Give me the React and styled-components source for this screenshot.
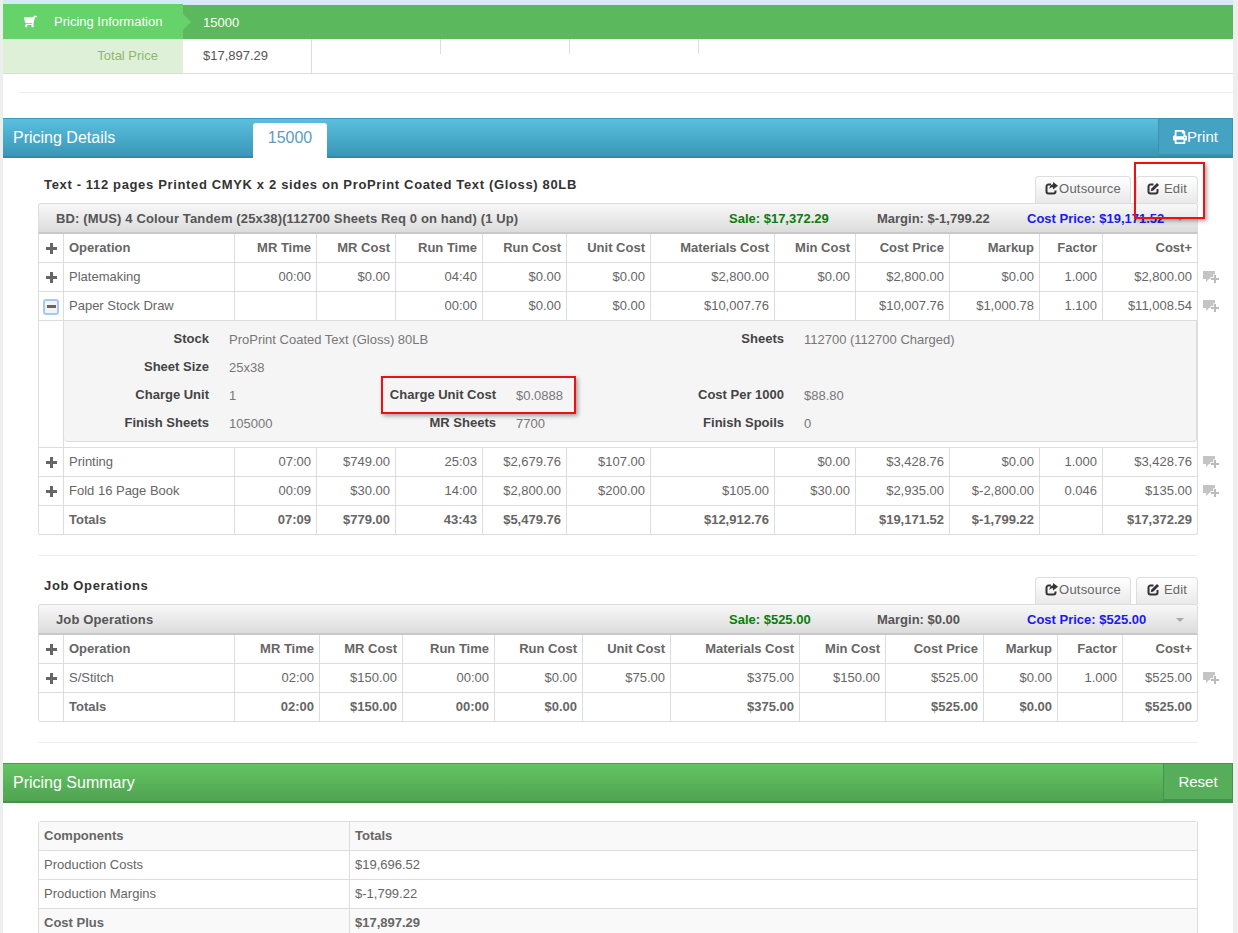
import React from 'react';
import styled, { createGlobalStyle } from 'styled-components';
import { FaShoppingCart, FaPrint } from 'react-icons/fa';

const Global = createGlobalStyle`
  html, body { margin: 0; padding: 0; background: #fff; }
  body { font-family: "Liberation Sans", Arial, sans-serif; font-size: 13px; color: #666; height: 933px; overflow: hidden; }
`;

const Page = styled.div`
  position: relative;
  width: 1238px;
  height: 933px;
  overflow: hidden;
  background: #eee;
  padding: 0 5px 0 3px;
  box-sizing: border-box;
`;

const Main = styled.div`
  background: #fff;
  height: 100%;
  border-top: 4px solid #d4eaf6;
`;

const InfoBar = styled.div`
  display: flex;
  height: 35px;
  box-sizing: border-box;
  border-top: 1px solid #d4eaf6;
  background: #5cb85c;
  color: #fff;
  font-size: 13px;
  align-items: center;
`;

const InfoLabel = styled.div`
  position: relative;
  width: 180px;
  height: 35px;
  margin-top: -1px;
  background: #65d26a;
  display: flex;
  align-items: center;
  box-sizing: border-box;
  padding-left: 21px;
  gap: 17px;
  svg { width: 13px; height: 13px; transform: scaleX(-1); }
  &:after {
    content: '';
    position: absolute;
    left: 100%;
    top: 10px;
    border-left: 8px solid #65d26a;
    border-top: 8px solid transparent;
    border-bottom: 8px solid transparent;
  }
`;

const InfoValue = styled.div`
  padding-left: 20px;
`;

const InfoRow = styled.div`
  display: flex;
  height: 34px;
  border-bottom: 1px solid #ddd;
`;

const InfoKey = styled.div`
  width: 180px;
  box-sizing: border-box;
  background: #dff0d8;
  color: #8fb56f;
  text-align: right;
  line-height: 33px;
  padding-right: 25px;
`;

const InfoCell = styled.div`
  width: ${p => p.$w}px;
  box-sizing: border-box;
  line-height: 33px;
  padding-left: 20px;
  color: #555;
  border-right: 1px solid #ddd;
  ${p => p.$short && 'height: 15px;'}
`;

const Rule = styled.div`
  height: 1px;
  background: #eee;
  margin: ${p => p.$m || '18px 0 25px 15px'};
`;

const Header = styled.div`
  position: relative;
  display: flex;
  align-items: center;
  height: 40px;
  box-sizing: border-box;
  color: #fff;
  font-size: 16px;
  padding-left: 10px;
  background: linear-gradient(to bottom, ${p => p.$green ? '#62c462, #51a351' : '#5bbfdd, #3997b7'});
  border-top: 1px solid ${p => p.$green ? '#4c9a4c' : '#3a9cbd'};
  border-bottom: 2px solid ${p => p.$green ? '#47904a' : '#338aa8'};
`;

const HeaderTitle = styled.div`
  width: 240px;
`;

const Tab = styled.div`
  align-self: flex-end;
  width: 74px;
  height: 35px;
  margin-bottom: -2px;
  background: #fff;
  color: #5b9dc0;
  border-radius: 3px 3px 0 0;
  text-align: center;
  line-height: 30px;
`;

const HeaderButton = styled.div`
  margin-left: auto;
  height: 38px;
  width: ${p => p.$w}px;
  box-sizing: border-box;
  margin-bottom: 1px;
  display: flex;
  align-items: center;
  justify-content: center;
  font-size: 15px;
  background: ${p => p.$green ? '#57ae5a' : '#44a3c3'};
  border: 1px solid ${p => p.$green ? '#45934a' : '#3a93b1'};
  border-bottom-width: 2px;
  svg { width: 14px; height: 14px; }
`;

const Content = styled.div`
  padding: 18px 35px 0;
`;

const JobHead = styled.div`
  display: flex;
  align-items: flex-start;
  justify-content: space-between;
  height: 27px;
`;

const JobTitle = styled.div`
  font-size: 13px;
  font-weight: bold;
  color: #333;
  letter-spacing: 0.65px;
  padding-left: 6px;
  line-height: 17px;
`;

const JobActions = styled.div`
  display: flex;
  gap: 5px;
`;

const TabButton = styled.div`
  height: 27px;
  width: ${p => p.$w}px;
  box-sizing: border-box;
  padding-bottom: 3px;
  display: flex;
  align-items: center;
  justify-content: center;
  gap: ${p => p.$gap}px;
  color: #666;
  font-size: 13px;
  letter-spacing: 0.2px;
  border: 1px solid #ddd;
  border-bottom: 0;
  border-radius: 4px 4px 0 0;
  background: linear-gradient(to bottom, #fff, #e9e9e9);
`;

const Machine = styled.div`
  display: flex;
  align-items: center;
  height: 31px;
  box-sizing: border-box;
  font-weight: bold;
  color: #555;
  font-size: 13px;
  padding-left: 17px;
  border: 1px solid #ddd;
  border-bottom: 2px solid #c8c8c8;
  border-radius: 3px 3px 0 0;
  background: linear-gradient(to bottom, #f8f8f8, #dcdcdc);
`;

const MachineName = styled.div`
  flex: 1;
  white-space: nowrap;
  letter-spacing: 0.14px;
`;

const Stat = styled.div`
  width: ${p => p.$w}px;
  color: ${p => p.$c || '#555'};
  white-space: nowrap;
`;

const Caret = styled.div`
  width: 0;
  height: 0;
  margin: 2px 13px 0 0;
  border-left: 4px solid transparent;
  border-right: 4px solid transparent;
  border-top: 4px solid #aaa;
`;

const Table = styled.table`
  width: 100%;
  table-layout: fixed;
  border-collapse: separate;
  border-spacing: 0;
  border-left: 1px solid #ddd;
  border-radius: 0 0 3px 3px;
  th, td {
    height: 29px;
    padding: 0 5px;
    font-size: 13px;
    line-height: 18px;
    border-right: 1px solid #ddd;
    border-bottom: 1px solid #ddd;
    text-align: right;
    white-space: nowrap;
    box-sizing: border-box;
  }
  th { color: #666; font-weight: bold; }
  th:nth-child(2), td:nth-child(2) { text-align: left; }
  th:first-child, td:first-child { padding: 0; text-align: center; }
  tbody tr:last-child td { font-weight: bold; }
  tr:last-child td:last-child { border-bottom-right-radius: 3px; }
`;

const DetailCell = styled.td`
  && { padding: 0 0 5px 0; text-align: left; height: auto; font-weight: normal; }
`;

const DetailPanel = styled.div`
  display: grid;
  grid-template-columns: 145px 171px 116px 172px 116px 1fr;
  grid-auto-rows: 28px;
  align-items: center;
  padding: 4px 0;
  height: 121px;
  box-sizing: border-box;
  background: #f5f5f5;
  border-bottom: 1px solid #ddd;
  border-right: 1px solid #ddd;
  border-radius: 0 0 4px 4px;
`;

const DetailKey = styled.div`
  text-align: right;
  font-weight: bold;
  font-size: 13px;
  color: #444;
  margin-top: -1px;
`;

const DetailValue = styled.div`
  padding-left: 20px;
  font-size: 13px;
  color: #777;
  white-space: nowrap;
  margin-top: 1px;
`;

const Toggle = styled.span`
  display: inline-flex;
  align-items: center;
  justify-content: center;
  vertical-align: middle;
  width: ${p => p.$open ? '16px' : '12px'};
  height: ${p => p.$open ? '16px' : '12px'};
  box-sizing: border-box;
  ${p => p.$open && 'border: 2px solid #a6c8f8; border-radius: 3px; background: #f4f4f4;'}
`;

const CommentSlot = styled.span`
  position: absolute;
  right: -22px;
  top: 8px;
  line-height: 0;
`;

const LastCell = styled.td`
  position: relative;
`;

const SummaryTable = styled.table`
  width: 100%;
  table-layout: fixed;
  border-collapse: separate;
  border-spacing: 0;
  border-left: 1px solid #ddd;
  border-top: 1px solid #ddd;
  border-radius: 3px 3px 0 0;
  th, td {
    height: 29px;
    padding: 0 5px;
    font-size: 13px;
    line-height: 18px;
    text-align: left;
    box-sizing: border-box;
    border-right: 1px solid #ddd;
    border-bottom: 1px solid #ddd;
  }
  th { font-weight: bold; background: #f9f9f9; }
`;

const Mark = styled.div`
  position: absolute;
  left: ${p => p.$x}px;
  top: ${p => p.$y}px;
  width: ${p => p.$w}px;
  height: ${p => p.$h}px;
  box-sizing: border-box;
  border: 2px solid #ee1111;
  box-shadow: 2px 2px 4px rgba(0, 0, 0, 0.35);
`;

const PlusIcon = () => (
  <svg width="11" height="11" viewBox="0 0 11 11"><path d="M4 0h3v4h4v3H7v4H4V7H0V4h4z" fill="#666" /></svg>
);

const MinusIcon = () => (
  <svg width="9" height="3" viewBox="0 0 9 3"><path d="M0 0h9v3H0z" fill="#666" /></svg>
);

const CommentPlus = () => (
  <svg width="16" height="13" viewBox="0 0 16 13">
    <path d="M0 0h12v8H6l-3 3V8H0z" fill="#c4c4c4" />
    <path d="M11 4h2v3h3v2h-3v3h-2V9H8V7h3z" fill="#bbb" stroke="#fff" strokeWidth="1.4" paintOrder="stroke" />
  </svg>
);

const ShareIcon = () => (
  <svg width="13" height="13" viewBox="0 0 13 13">
    <path d="M6 2.5H3.5A2 2 0 0 0 1.5 4.5v5a2 2 0 0 0 2 2h5a2 2 0 0 0 2-2V8.5" fill="none" stroke="#333" strokeWidth="2" />
    <path d="M8 0l5 3.7L8 7.4V5.2C6.4 5.2 5.2 5.8 4.4 7.2 4.4 4.6 5.8 2.7 8 2.3z" fill="#333" />
  </svg>
);

const EditIcon = () => (
  <svg width="13" height="13" viewBox="0 0 13 13">
    <path d="M6.5 2.5h-3a2 2 0 0 0-2 2v5a2 2 0 0 0 2 2h5a2 2 0 0 0 2-2V7" fill="none" stroke="#333" strokeWidth="2" />
    <path d="M10 1l2 2-5.6 5.6-2.6.6.6-2.6z" fill="#333" />
  </svg>
);

const Row = ({ cells, toggle }) => (
  <tr>
    <td>{toggle}</td>
    {cells.slice(0, -1).map((c, i) => <td key={i}>{c}</td>)}
    <LastCell>
      {cells[cells.length - 1]}
      {toggle && <CommentSlot><CommentPlus /></CommentSlot>}
    </LastCell>
  </tr>
);

const Cols = ({ widths }) => (
  <colgroup>
    {widths.map((w, i) => <col key={i} style={{ width: w }} />)}
  </colgroup>
);

const heads = ['Operation', 'MR Time', 'MR Cost', 'Run Time', 'Run Cost', 'Unit Cost', 'Materials Cost', 'Min Cost', 'Cost Price', 'Markup', 'Factor', 'Cost+'];
const plus = <Toggle><PlusIcon /></Toggle>;

const TableHead = () => (
  <thead>
    <tr>
      <th>{plus}</th>
      {heads.map(h => <th key={h}>{h}</th>)}
    </tr>
  </thead>
);

const JobActionButtons = () => (
  <JobActions>
    <TabButton $w={96} $gap={1}><ShareIcon />Outsource</TabButton>
    <TabButton $w={62} $gap={4}><EditIcon />Edit</TabButton>
  </JobActions>
);

const detail = [
  ['Stock', 'ProPrint Coated Text (Gloss) 80LB', '', '', 'Sheets', '112700 (112700 Charged)'],
  ['Sheet Size', '25x38', '', '', '', ''],
  ['Charge Unit', '1', 'Charge Unit Cost', '$0.0888', 'Cost Per 1000', '$88.80'],
  ['Finish Sheets', '105000', 'MR Sheets', '7700', 'Finish Spoils', '0'],
];

export default function App() {
  return (
    <>
      <Global />
      <Page>
        <Main>
          <InfoBar>
            <InfoLabel><FaShoppingCart />Pricing Information</InfoLabel>
            <InfoValue>15000</InfoValue>
          </InfoBar>
          <InfoRow>
            <InfoKey>Total Price</InfoKey>
            <InfoCell $w={129}>$17,897.29</InfoCell>
            <InfoCell $w={129} $short />
            <InfoCell $w={129} $short />
            <InfoCell $w={129} $short />
          </InfoRow>
          <Rule />
          <Header>
            <HeaderTitle>Pricing Details</HeaderTitle>
            <Tab>15000</Tab>
            <HeaderButton $w={75}><FaPrint />Print</HeaderButton>
          </Header>
          <Content>
            <JobHead>
              <JobTitle>Text - 112 pages Printed CMYK x 2 sides on ProPrint Coated Text (Gloss) 80LB</JobTitle>
              <JobActionButtons />
            </JobHead>
            <Machine>
              <MachineName>BD: (MUS) 4 Colour Tandem (25x38)(112700 Sheets Req 0 on hand) (1 Up)</MachineName>
              <Stat $w={148} $c="#0a7d0a">Sale: $17,372.29</Stat>
              <Stat $w={150}>Margin: $-1,799.22</Stat>
              <Stat $w={149} $c="#1a1aee">Cost Price: $19,171.52</Stat>
              <Caret />
            </Machine>
            <Table>
              <Cols widths={[25, 171, 82, 79, 87, 84, 84, 124, 81, 94, 90, 63, 95]} />
              <TableHead />
              <tbody>
                <Row toggle={plus} cells={['Platemaking', '00:00', '$0.00', '04:40', '$0.00', '$0.00', '$2,800.00', '$0.00', '$2,800.00', '$0.00', '1.000', '$2,800.00']} />
                <Row toggle={<Toggle $open><MinusIcon /></Toggle>} cells={['Paper Stock Draw', '', '', '00:00', '$0.00', '$0.00', '$10,007.76', '', '$10,007.76', '$1,000.78', '1.100', '$11,008.54']} />
                <tr>
                  <td />
                  <DetailCell colSpan={12}>
                    <DetailPanel>
                      {detail.flatMap((r, i) => r.map((t, j) => (
                        j % 2 === 0
                          ? <DetailKey key={`${i}-${j}`}>{t}</DetailKey>
                          : <DetailValue key={`${i}-${j}`}>{t}</DetailValue>
                      )))}
                    </DetailPanel>
                  </DetailCell>
                </tr>
                <Row toggle={plus} cells={['Printing', '07:00', '$749.00', '25:03', '$2,679.76', '$107.00', '', '$0.00', '$3,428.76', '$0.00', '1.000', '$3,428.76']} />
                <Row toggle={plus} cells={['Fold 16 Page Book', '00:09', '$30.00', '14:00', '$2,800.00', '$200.00', '$105.00', '$30.00', '$2,935.00', '$-2,800.00', '0.046', '$135.00']} />
                <Row cells={['Totals', '07:09', '$779.00', '43:43', '$5,479.76', '', '$12,912.76', '', '$19,171.52', '$-1,799.22', '', '$17,372.29']} />
              </tbody>
            </Table>
            <Rule $m="20px 0 21px 0" />
            <JobHead>
              <JobTitle>Job Operations</JobTitle>
              <JobActionButtons />
            </JobHead>
            <Machine>
              <MachineName>Job Operations</MachineName>
              <Stat $w={148} $c="#0a7d0a">Sale: $525.00</Stat>
              <Stat $w={150}>Margin: $0.00</Stat>
              <Stat $w={149} $c="#1a1aee">Cost Price: $525.00</Stat>
              <Caret />
            </Machine>
            <Table>
              <Cols widths={[25, 171, 85, 83, 92, 88, 88, 129, 86, 98, 74, 65, 75]} />
              <TableHead />
              <tbody>
                <Row toggle={plus} cells={['S/Stitch', '02:00', '$150.00', '00:00', '$0.00', '$75.00', '$375.00', '$150.00', '$525.00', '$0.00', '1.000', '$525.00']} />
                <Row cells={['Totals', '02:00', '$150.00', '00:00', '$0.00', '', '$375.00', '', '$525.00', '$0.00', '', '$525.00']} />
              </tbody>
            </Table>
            <Rule $m="20px 0 20px 0" />
          </Content>
          <Header $green>
            <HeaderTitle>Pricing Summary</HeaderTitle>
            <HeaderButton $w={70} $green>Reset</HeaderButton>
          </Header>
          <Content>
            <SummaryTable>
              <colgroup>
                <col style={{ width: 311 }} />
                <col />
              </colgroup>
              <thead>
                <tr><th>Components</th><th>Totals</th></tr>
              </thead>
              <tbody>
                <tr><td>Production Costs</td><td>$19,696.52</td></tr>
                <tr><td>Production Margins</td><td>$-1,799.22</td></tr>
                <tr><th>Cost Plus</th><th>$17,897.29</th></tr>
              </tbody>
            </SummaryTable>
          </Content>
        </Main>
        <Mark $x={1134} $y={162} $w={71} $h={57} />
        <Mark $x={381} $y={376} $w={195} $h={38} />
      </Page>
    </>
  );
}
